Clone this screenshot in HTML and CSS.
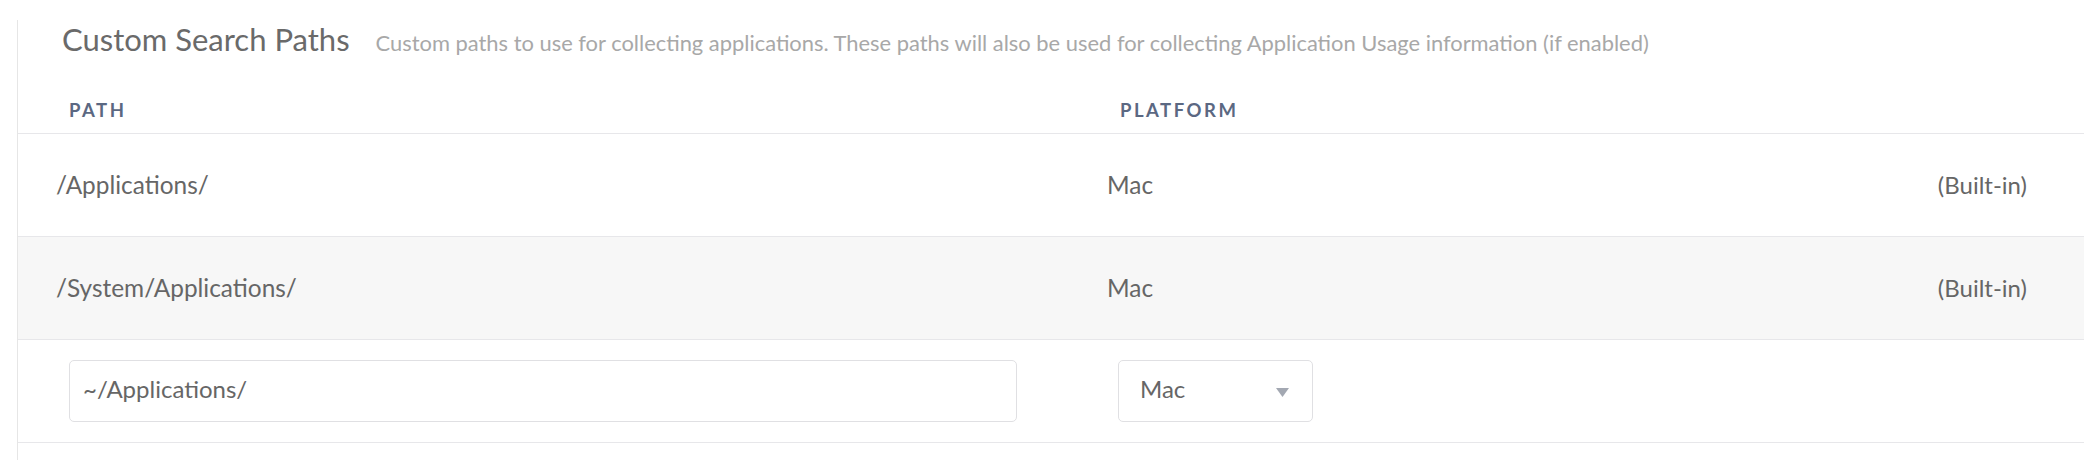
FILE: index.html
```html
<!DOCTYPE html>
<html>
<head>
<meta charset="utf-8">
<link rel="stylesheet" href="styles.css">
</head>
<body>
<section class="panel">
  <div class="title-row">
    <h2 class="title">Custom Search Paths</h2>
    <span class="subtitle">Custom paths to use for collecting applications. These paths will also be used for collecting Application Usage information (if enabled)</span>
  </div>
  <div class="row head">
    <div class="cell hcell">PATH</div>
    <div class="cell hcell">PLATFORM</div>
    <div class="cell"></div>
  </div>
  <div class="row data">
    <div class="cell dcell">/Applications/</div>
    <div class="cell dcell">Mac</div>
    <div class="cell dcell end">(Built-in)</div>
  </div>
  <div class="row data alt">
    <div class="cell dcell">/System/Applications/</div>
    <div class="cell dcell">Mac</div>
    <div class="cell dcell end">(Built-in)</div>
  </div>
  <div class="row data">
    <div class="cell icell"><input class="text-input" type="text" value="~/Applications/"></div>
    <div class="cell scell">
      <div class="select"><span>Mac</span><svg class="caret" width="13" height="9" viewBox="0 0 13 9"><path d="M0 0H13L6.5 9Z" fill="#a3a8b2"/></svg></div>
    </div>
    <div class="cell"></div>
  </div>
</section>
</body>
</html>
```

FILE: styles.css
```css
* { box-sizing: border-box; }
html, body { margin: 0; padding: 0; background: #ffffff; }
body {
  font-family: "Lato", "Liberation Sans", sans-serif;
  color: #666666;
  width: 2084px;
  height: 460px;
  overflow: hidden;
}
.panel {
  margin: 20px 0 0 17px;
  border-left: 1px solid #e6e6e6;
  height: 440px;
}
.title-row {
  display: flex;
  align-items: baseline;
  gap: 26px;
  height: 57px;
  padding: 1px 0 0 44px;
}
.title {
  margin: 0;
  font-size: 31px;
  line-height: 36px;
  font-weight: 400;
  color: #6a6a6a;
}
.subtitle {
  font-size: 21.9px;
  color: #a8a8a8;
}
.row {
  display: grid;
  grid-template-columns: 1051px 1fr auto;
  border-bottom: 1px solid #e7e7ea;
}
.head {
  height: 57px;
  align-items: end;
}
.hcell {
  padding: 0 0 14px 51px;
  font-size: 18.5px;
  line-height: 18px;
  font-weight: 700;
  letter-spacing: 2.5px;
  color: #5b6882;
}
.data {
  height: 103px;
  align-items: center;
}
.alt { background: #f7f7f7; }
.dcell {
  padding-left: 38px;
  font-size: 24.4px;
  line-height: 30px;
}
.end { padding: 0 57px 0 0; font-size: 24px; }
.icell { padding-left: 51px; }
.text-input {
  display: block;
  width: 948px;
  height: 62px;
  border: 1px solid #e0e0e3;
  border-radius: 5px;
  padding: 0 0 5px 13px;
  font-family: inherit;
  font-size: 24px;
  color: #666666;
  background: #ffffff;
  outline: none;
}
.scell { padding-left: 49px; }
.select {
  width: 195px;
  height: 62px;
  border: 1px solid #e0e0e3;
  border-radius: 5px;
  display: flex;
  align-items: center;
  justify-content: space-between;
  padding: 0 23px 5px 21px;
  font-size: 24px;
  background: #ffffff;
}
.caret { display: block; margin-top: 7px; }
```
